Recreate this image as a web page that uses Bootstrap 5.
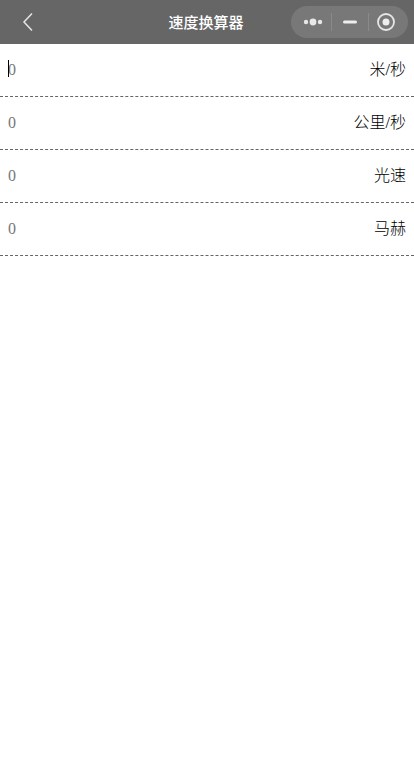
<!DOCTYPE html>
<html lang="zh">
<head>
<meta charset="utf-8">
<title>速度换算器</title>
<link href="https://cdn.jsdelivr.net/npm/bootstrap@5.3.0/dist/css/bootstrap.min.css" rel="stylesheet">
<style>
html,body{height:100%;}
body{background:#fff;color:#000;font-family:"Liberation Serif","Noto Sans CJK SC",serif;font-size:16px;}
.top-bar{height:44px;background:#666;position:relative;}
.back-btn{width:55px;height:44px;}
.page-title{position:absolute;left:0;right:2px;top:0;line-height:44px;text-align:center;color:#fff;font-family:"Noto Sans CJK SC",sans-serif;font-size:15px;font-weight:500;}
.capsule{position:absolute;top:6px;right:6px;width:117px;height:32px;border-radius:16px;background:#787878;}
.cap-one{width:40px;height:100%;padding-left:4px;}
.cap-two{width:36px;height:100%;}
.cap-three{width:39px;height:100%;padding-right:5px;}
.cap-sep{width:1px;height:18px;background:#8a8a8a;}
.conv-row{height:53px;border-bottom:1px dashed #666;padding:0 8px;}
.conv-val{color:#777;position:relative;}
.caret-line{position:absolute;left:0;top:2px;width:1px;height:17px;background:#000;}
.conv-unit{color:#000;font-weight:300;}
</style>
</head>
<body>
<div class="top-bar d-flex align-items-center">
  <div class="back-btn d-flex align-items-center justify-content-center">
    <svg width="12" height="20" viewBox="0 0 12 20"><path d="M10 1.5 2 10l8 8.5" fill="none" stroke="#e6e6e6" stroke-width="1.5"/></svg>
  </div>
  <div class="page-title">速度换算器</div>
  <div class="capsule d-flex align-items-center">
    <div class="cap-one d-flex align-items-center justify-content-center">
      <svg width="20" height="8" viewBox="0 0 20 8"><circle cx="3" cy="4" r="2.2" fill="#e8e8e8"/><circle cx="10" cy="4" r="3.4" fill="#e8e8e8"/><circle cx="17" cy="4" r="2.2" fill="#e8e8e8"/></svg>
    </div>
    <div class="cap-sep"></div>
    <div class="cap-two d-flex align-items-center justify-content-center">
      <svg width="16" height="4" viewBox="0 0 16 4"><rect x="1" y="0.5" width="14" height="3" rx="1.5" fill="#eee"/></svg>
    </div>
    <div class="cap-sep"></div>
    <div class="cap-three d-flex align-items-center justify-content-center">
      <svg width="20" height="20" viewBox="0 0 20 20"><circle cx="10" cy="10" r="8" fill="none" stroke="#e6e6e6" stroke-width="1.8"/><circle cx="10" cy="10" r="3.5" fill="#eee"/></svg>
    </div>
  </div>
</div>
<div class="conv-row d-flex align-items-center justify-content-between"><span class="conv-val">0<i class="caret-line"></i></span><span class="conv-unit">米/秒</span></div>
<div class="conv-row d-flex align-items-center justify-content-between"><span class="conv-val">0</span><span class="conv-unit">公里/秒</span></div>
<div class="conv-row d-flex align-items-center justify-content-between"><span class="conv-val">0</span><span class="conv-unit">光速</span></div>
<div class="conv-row d-flex align-items-center justify-content-between"><span class="conv-val">0</span><span class="conv-unit">马赫</span></div>
<script src="https://cdn.jsdelivr.net/npm/bootstrap@5.3.0/dist/js/bootstrap.bundle.min.js"></script>
</body>
</html>
